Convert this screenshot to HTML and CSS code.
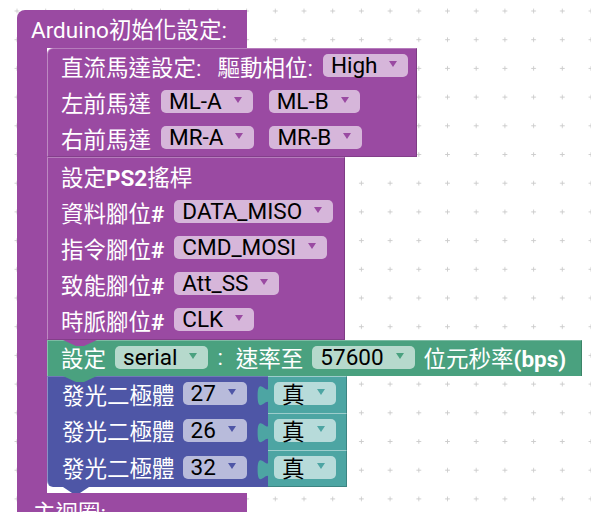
FILE: index.html
```html
<!DOCTYPE html>
<html>
<head>
<meta charset="utf-8">
<link rel="stylesheet" href="styles.css">
</head>
<body>
<svg class="grid" width="591" height="512">
  <defs>
    <pattern id="g" x="2.65" y="-3.35" width="28.7" height="28.7" patternUnits="userSpaceOnUse">
      <path d="M12 14.35h4.7M14.35 12v4.7" stroke="#cdcdcd" stroke-width="1" fill="none"/>
    </pattern>
  </defs>
  <rect width="591" height="512" fill="url(#g)"/>
</svg>

<div class="root c-purple">
  <div class="hat">Arduino初始化設定:</div>
  <div class="body">
    <div class="arm"></div>
    <div class="stack">

      <div class="blk motor c-purple">
        <div class="row">
          <span>直流馬達設定:</span>
          <span class="ml6">驅動相位:</span>
          <span class="dd">High<i class="arr"></i></span>
        </div>
        <div class="row">
          <span>左前馬達</span>
          <span class="dd">ML-A<i class="arr"></i></span>
          <span class="dd ml6">ML-B<i class="arr"></i></span>
        </div>
        <div class="row">
          <span>右前馬達</span>
          <span class="dd">MR-A<i class="arr"></i></span>
          <span class="dd ml5">MR-B<i class="arr"></i></span>
        </div>
      </div>

      <div class="blk ps2 c-purple">
        <div class="row"><span>設定<b>PS2</b>搖桿</span></div>
        <div class="row"><span>資料腳位<b>#</b></span><span class="dd">DATA_MISO<i class="arr"></i></span></div>
        <div class="row"><span>指令腳位<b>#</b></span><span class="dd">CMD_MOSI<i class="arr"></i></span></div>
        <div class="row"><span>致能腳位<b>#</b></span><span class="dd">Att_SS<i class="arr"></i></span></div>
        <div class="row"><span>時脈腳位<b>#</b></span><span class="dd">CLK<i class="arr"></i></span></div>
        <div class="tab"></div>
      </div>

      <div class="blk serial c-green">
        <div class="row srow">
          <span>設定</span>
          <span class="dd">serial<i class="arr"></i></span>
          <span>:</span>
          <span class="ml4">速率至</span>
          <span class="dd">57600<i class="arr"></i></span>
          <span>位元秒率<b>(bps)</b></span>
        </div>
        <div class="tab"></div>
      </div>

      <div class="leds">
        <div class="led">
          <div class="ledb c-blue"><span>發光二極體</span><span class="dd">27<i class="arr"></i></span></div>
          <div class="val c-teal">
            <svg class="otab" width="12" height="24" viewBox="0 0 12 24"><path d="M12,0 C12,14.3 0.6,-11.4 0.6,10.7 S12,7.15 12,21.45 Z"/></svg>
            <span class="dd">真<i class="arr"></i></span>
          </div>
        </div>
        <div class="led">
          <div class="ledb c-blue"><span>發光二極體</span><span class="dd">26<i class="arr"></i></span></div>
          <div class="val c-teal">
            <svg class="otab" width="12" height="24" viewBox="0 0 12 24"><path d="M12,0 C12,14.3 0.6,-11.4 0.6,10.7 S12,7.15 12,21.45 Z"/></svg>
            <span class="dd">真<i class="arr"></i></span>
          </div>
        </div>
        <div class="led last">
          <div class="ledb c-blue"><span>發光二極體</span><span class="dd">32<i class="arr"></i></span><div class="tab"></div></div>
          <div class="val c-teal">
            <svg class="otab" width="12" height="24" viewBox="0 0 12 24"><path d="M12,0 C12,14.3 0.6,-11.4 0.6,10.7 S12,7.15 12,21.45 Z"/></svg>
            <span class="dd">真<i class="arr"></i></span>
          </div>
        </div>
      </div>

    </div>
  </div>
  <div class="arm2">主迴圈:</div>
</div>
</body>
</html>
```

FILE: styles.css
```css
* { box-sizing: border-box; margin: 0; padding: 0; }

html, body {
  width: 591px;
  height: 512px;
  overflow: hidden;
  background: #fff;
}

body {
  position: relative;
  font-family: Roboto, "Noto Sans CJK TC", sans-serif;
  font-size: 22.5px;
  color: #fff;
}

b { font-weight: 700; }

.grid {
  position: absolute;
  left: 0;
  top: 0;
  z-index: 0;
}

.c-purple { --c: #9a4aa2; }
.c-green  { --c: #4aa17f; }
.c-blue   { --c: #4e56a6; }
.c-teal   { --c: #4da5a3; }

.root {
  position: relative;
  z-index: 1;
  margin: 10px 0 0 17px;
  display: flex;
  flex-direction: column;
  align-items: flex-start;
}

.hat {
  width: 230px;
  height: 38px;
  background: var(--c);
  border-radius: 8px 0 0 0;
  padding: 0 0 3px 14px;
  display: flex;
  align-items: center;
  white-space: nowrap;
}

.body { display: flex; }

.arm {
  width: 30px;
  background: var(--c);
}

.stack {
  display: flex;
  flex-direction: column;
  align-items: flex-start;
  padding-bottom: 6px;
}

.blk {
  position: relative;
  background: var(--c);
  border-top: 1px solid rgba(255,255,255,.28);
  border-left: 1px solid rgba(255,255,255,.35);
  border-right: 1px solid rgba(0,0,0,.18);
  padding-left: 13px;
}

.row {
  display: flex;
  align-items: center;
  height: 36px;
  padding-bottom: 3px;
  gap: 10px;
  white-space: nowrap;
}

.motor {
  width: 370px;
  height: 109px;
  border-radius: 6px 0 0 0;
  border-bottom: 1px solid rgba(0,0,0,.15);
}

.ps2 {
  width: 298px;
  height: 183px;
  padding-top: 1px;
  border-bottom: 1px solid rgba(0,0,0,.15);
}

.serial {
  width: 535px;
  height: 36px;
}

.serial .row { height: 35px; gap: 9px; }

.ml4 { margin-left: 4px; }
.ml5 { margin-left: 5px; }
.ml6 { margin-left: 6px; }

.dd {
  display: flex;
  align-items: center;
  height: 23px;
  line-height: 23px;
  padding: 0 11px 0 8px;
  gap: 12px;
  border-radius: 5px;
  background: rgba(255,255,255,.6);
  color: #000;
}

.arr {
  display: block;
  width: 0;
  height: 0;
  margin-top: -3px;
  border-left: 4.5px solid transparent;
  border-right: 4.5px solid transparent;
  border-top: 6px solid var(--c);
}

.tab {
  position: absolute;
  z-index: 2;
  left: 15px;
  top: 100%;
  width: 34px;
  height: 6px;
  background: var(--c);
  clip-path: polygon(0 0, 13px 6px, 21px 6px, 34px 0);
}

.ps2 .tab { margin-top: 1px; }

.leds {
  display: flex;
  flex-direction: column;
}

.led {
  display: flex;
  height: 37px;
}

.ledb {
  position: relative;
  width: 221px;
  background: var(--c);
  border-left: 1px solid rgba(255,255,255,.35);
  padding: 0 0 3px 14px;
  display: flex;
  align-items: center;
  gap: 8px;
  white-space: nowrap;
}

.led:first-child .ledb { border-top: 1px solid rgba(255,255,255,.2); }

.led.last .ledb { border-radius: 0 0 0 6px; }

.led.last .tab { left: 15px; width: 26px; clip-path: polygon(0 0, 9px 6px, 17px 6px, 26px 0); }

.val {
  position: relative;
  width: 79px;
  background: var(--c);
  border-top: 1px solid rgba(255,255,255,.45);
  border-right: 1px solid rgba(0,0,0,.2);
  display: flex;
  align-items: center;
  padding: 0 0 3px 6px;
}

.led.last .val { border-bottom: 1px solid rgba(0,0,0,.2); }

.otab {
  position: absolute;
  left: -11.4px;
  top: 8px;
  fill: var(--c);
  overflow: visible;
}

.val .dd { font-family: "Noto Sans CJK TC", sans-serif; }

.arm2 {
  width: 230px;
  height: 38px;
  background: var(--c);
  padding: 0 0 3px 16px;
  display: flex;
  align-items: center;
  white-space: nowrap;
}
```
